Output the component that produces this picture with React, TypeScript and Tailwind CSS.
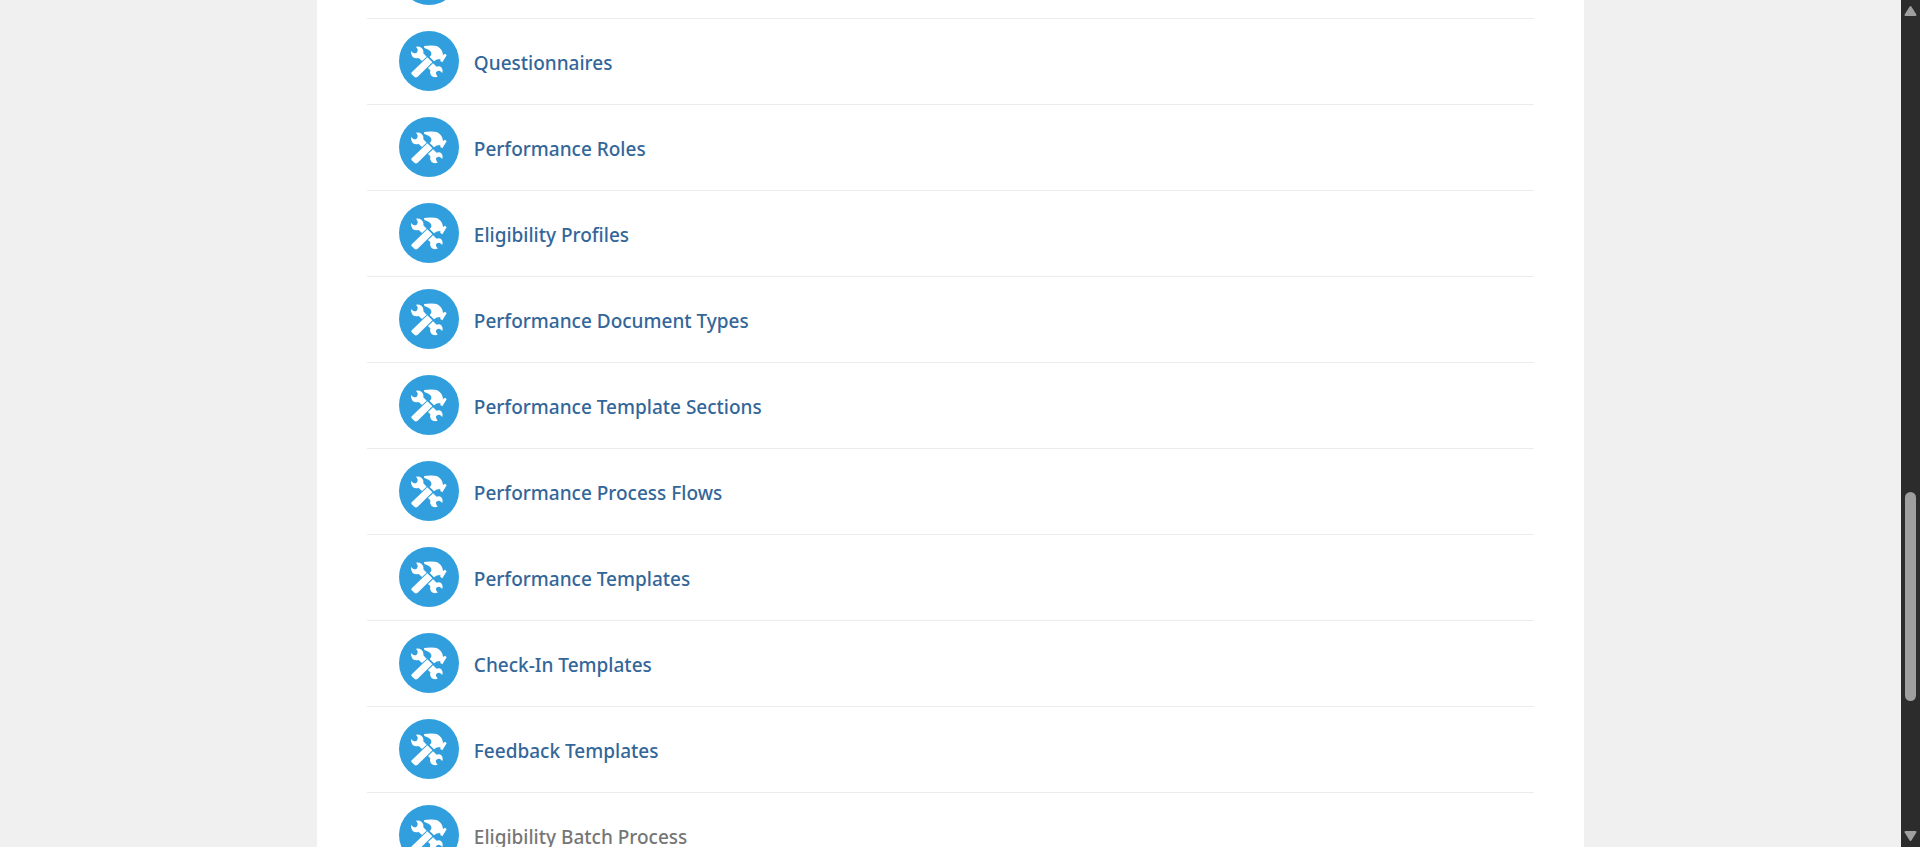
import React from "react";

type Item = { title?: string; muted?: boolean };

const items: Item[] = [
  {},
  { title: "Questionnaires" },
  { title: "Performance Roles" },
  { title: "Eligibility Profiles" },
  { title: "Performance Document Types" },
  { title: "Performance Template Sections" },
  { title: "Performance Process Flows" },
  { title: "Performance Templates" },
  { title: "Check-In Templates" },
  { title: "Feedback Templates" },
  { title: "Eligibility Batch Process", muted: true },
];

function ToolsIcon() {
  return (
    <svg viewBox="0 0 180 180" className="size-[60px] shrink-0" aria-hidden="true">
      <circle cx="90" cy="90" r="90" fill="#319fdd" />
      <g fill="#fff">
        <path d="M51 47 Q60 45 67 50 Q75 57 73 67 L83 77 L69 90 L59 81 Q48 84 41 78 Q35 71 36 60 L43 66 Q50 68 53 65 Q57 61 56 55 Z" />
        <path d="M75 45 Q92 42 108 44 Q122 46 129 60 Q131 65 132 72 L138 68 L143 73 L130 94 L124 90 L124 84 Q112 84 105 91 L92 78 Q99 73 97 65 Q93 56 76 51 Z" />
        <path d="M85 79 L100 94 L56 137 Q51 141 47 138 L38 130 Q35 126 39 123 Z" />
        <path d="M102 97 L113 107 Q122 104 128 110 Q133 116 130 126 L123 120 Q115 118 111 124 Q109 130 116 137 Q104 141 97 134 Q91 127 94 118 L87 111 Z" />
      </g>
    </svg>
  );
}

export default function App() {
  return (
    <div className="flex h-screen overflow-hidden bg-[#f0f0f0] font-['Noto_Sans','Open_Sans',sans-serif]">
      <div className="min-w-0 flex-1 overflow-hidden">
        <main className="mx-auto min-h-screen w-2/3 bg-white px-[50px]">
          <ul className="-mt-[67px]">
            {items.map((item, i) => (
              <li key={i} className="flex h-[86px] items-start gap-[15px] border-b border-[#ececec] px-8 pt-3">
                <ToolsIcon />
                {item.title && (
                  <h3 className="pt-4 text-[19px] leading-8 font-medium">
                    {item.muted ? (
                      <span className="text-[#767676]">{item.title}</span>
                    ) : (
                      <a href="#" className="text-[#336699]">{item.title}</a>
                    )}
                  </h3>
                )}
              </li>
            ))}
          </ul>
        </main>
      </div>
      <div className="flex w-[19px] shrink-0 flex-col items-center bg-[#2c2c2c] py-[5px]" aria-hidden="true">
        <svg viewBox="0 0 13 11" className="h-[11px] w-[13px]">
          <path d="M6.5 2 L11.5 10 H1.5 Z" fill="#9f9f9f" stroke="#9f9f9f" strokeWidth="2" strokeLinejoin="round" />
        </svg>
        <div className="flex w-full flex-1 flex-col items-center">
          <div className="grow-[476]" />
          <div className="w-[11px] grow-[209] rounded-full bg-[#9f9f9f]" />
          <div className="grow-[130]" />
        </div>
        <svg viewBox="0 0 13 11" className="h-[11px] w-[13px]">
          <path d="M6.5 9 L11.5 1 H1.5 Z" fill="#9f9f9f" stroke="#9f9f9f" strokeWidth="2" strokeLinejoin="round" />
        </svg>
      </div>
    </div>
  );
}
